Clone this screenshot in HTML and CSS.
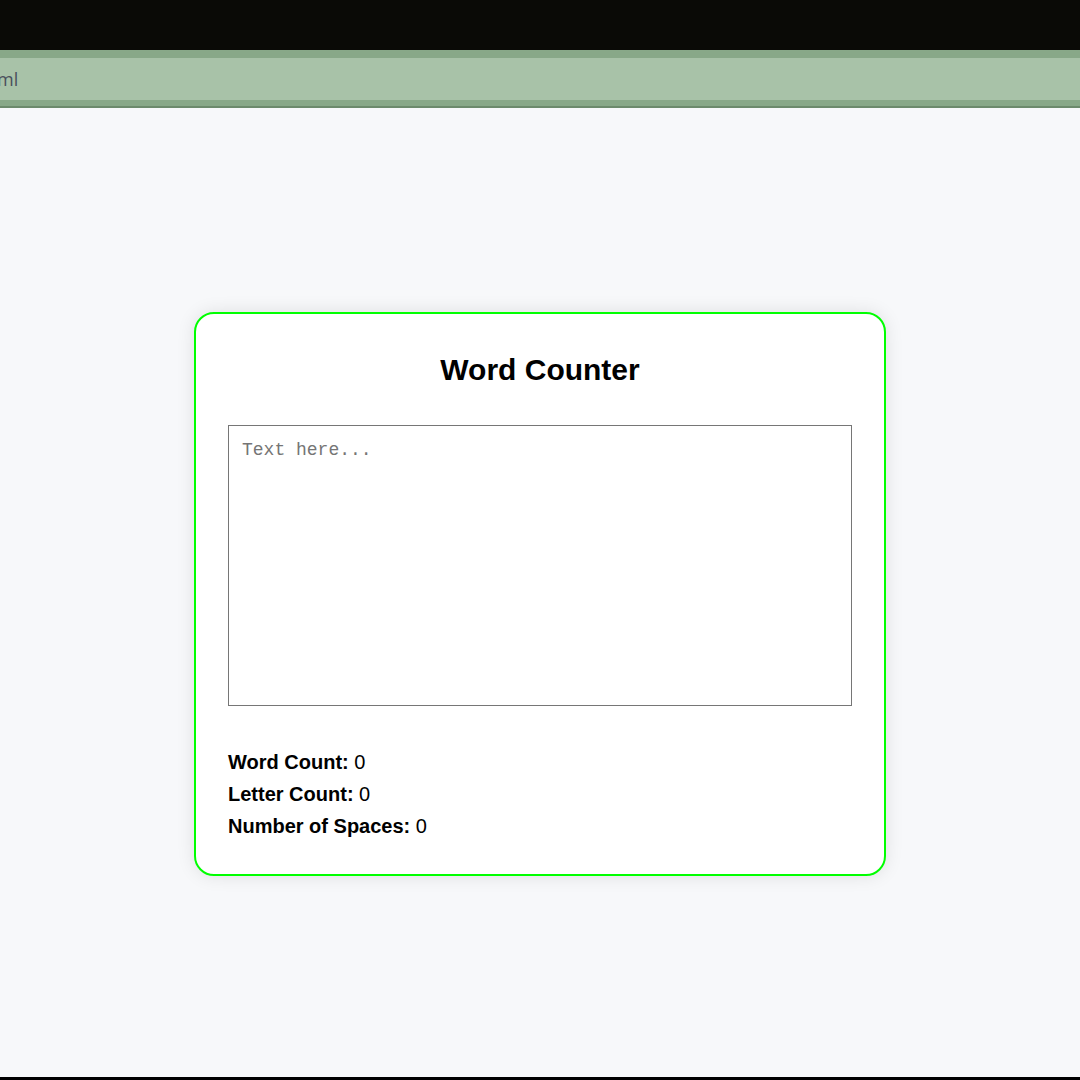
FILE: index.html
```html
<!DOCTYPE html>
<html lang="en">
<head>
<meta charset="utf-8">
<title>Word Counter</title>
<link rel="stylesheet" href="styles.css">
</head>
<body>
<div class="topbar"></div>
<div class="addressbar"><span class="address-text">ml</span></div>
<main class="page">
  <section class="card">
    <h1 class="title">Word Counter</h1>
    <textarea class="input" placeholder="Text here..."></textarea>
    <div class="stats">
      <div class="stat"><strong>Word Count:</strong> 0</div>
      <div class="stat"><strong>Letter Count:</strong> 0</div>
      <div class="stat"><strong>Number of Spaces:</strong> 0</div>
    </div>
  </section>
</main>
<div class="bottombar"></div>
</body>
</html>
```
FILE: styles.css
```css
html, body {
  margin: 0;
  padding: 0;
}
body {
  width: 1080px;
  height: 1080px;
  display: flex;
  flex-direction: column;
  background: #f7f8fa;
  font-family: "Liberation Sans", Arial, sans-serif;
  overflow: hidden;
}
.topbar {
  height: 50px;
  background: #0a0a06;
  flex: none;
}
.addressbar {
  height: 42px;
  background: #a8c2a8;
  border-top: 8px solid #88a888;
  border-bottom: 6px solid #88a888;
  box-shadow: 0 2px 0 #6c8a6c;
  margin-bottom: 2px;
  display: flex;
  align-items: center;
  flex: none;
}
.address-text {
  font-family: "Open Sans", "Noto Sans", sans-serif;
  font-size: 18px;
  color: #4a4f5c;
  margin-left: -3px;
}
.page {
  flex: 1;
  padding-top: 2px;
  display: flex;
  align-items: center;
  justify-content: center;
}
.card {
  width: 624px;
  padding: 32px;
  background: #ffffff;
  border: 2px solid #00ff00;
  border-radius: 20px;
  box-shadow: 0 0 18px rgba(0, 0, 0, 0.1);
  display: flex;
  flex-direction: column;
}
.title {
  margin: 7px 0 38px;
  font-size: 30px;
  font-weight: bold;
  text-align: center;
  color: #000;
}
.input {
  box-sizing: border-box;
  width: 100%;
  height: 281px;
  margin: 0;
  padding: 14px 12px 12px 13px;
  border: 1px solid #767676;
  border-radius: 0;
  font-family: "Liberation Mono", monospace;
  font-size: 18px;
  resize: none;
  outline: none;
  background: #fff;
}
.input::placeholder {
  color: #757575;
}
.stats {
  margin-top: 40px;
  font-size: 20px;
  line-height: 32px;
  color: #000;
}
.bottombar {
  height: 3px;
  background: #000;
  flex: none;
}
```
